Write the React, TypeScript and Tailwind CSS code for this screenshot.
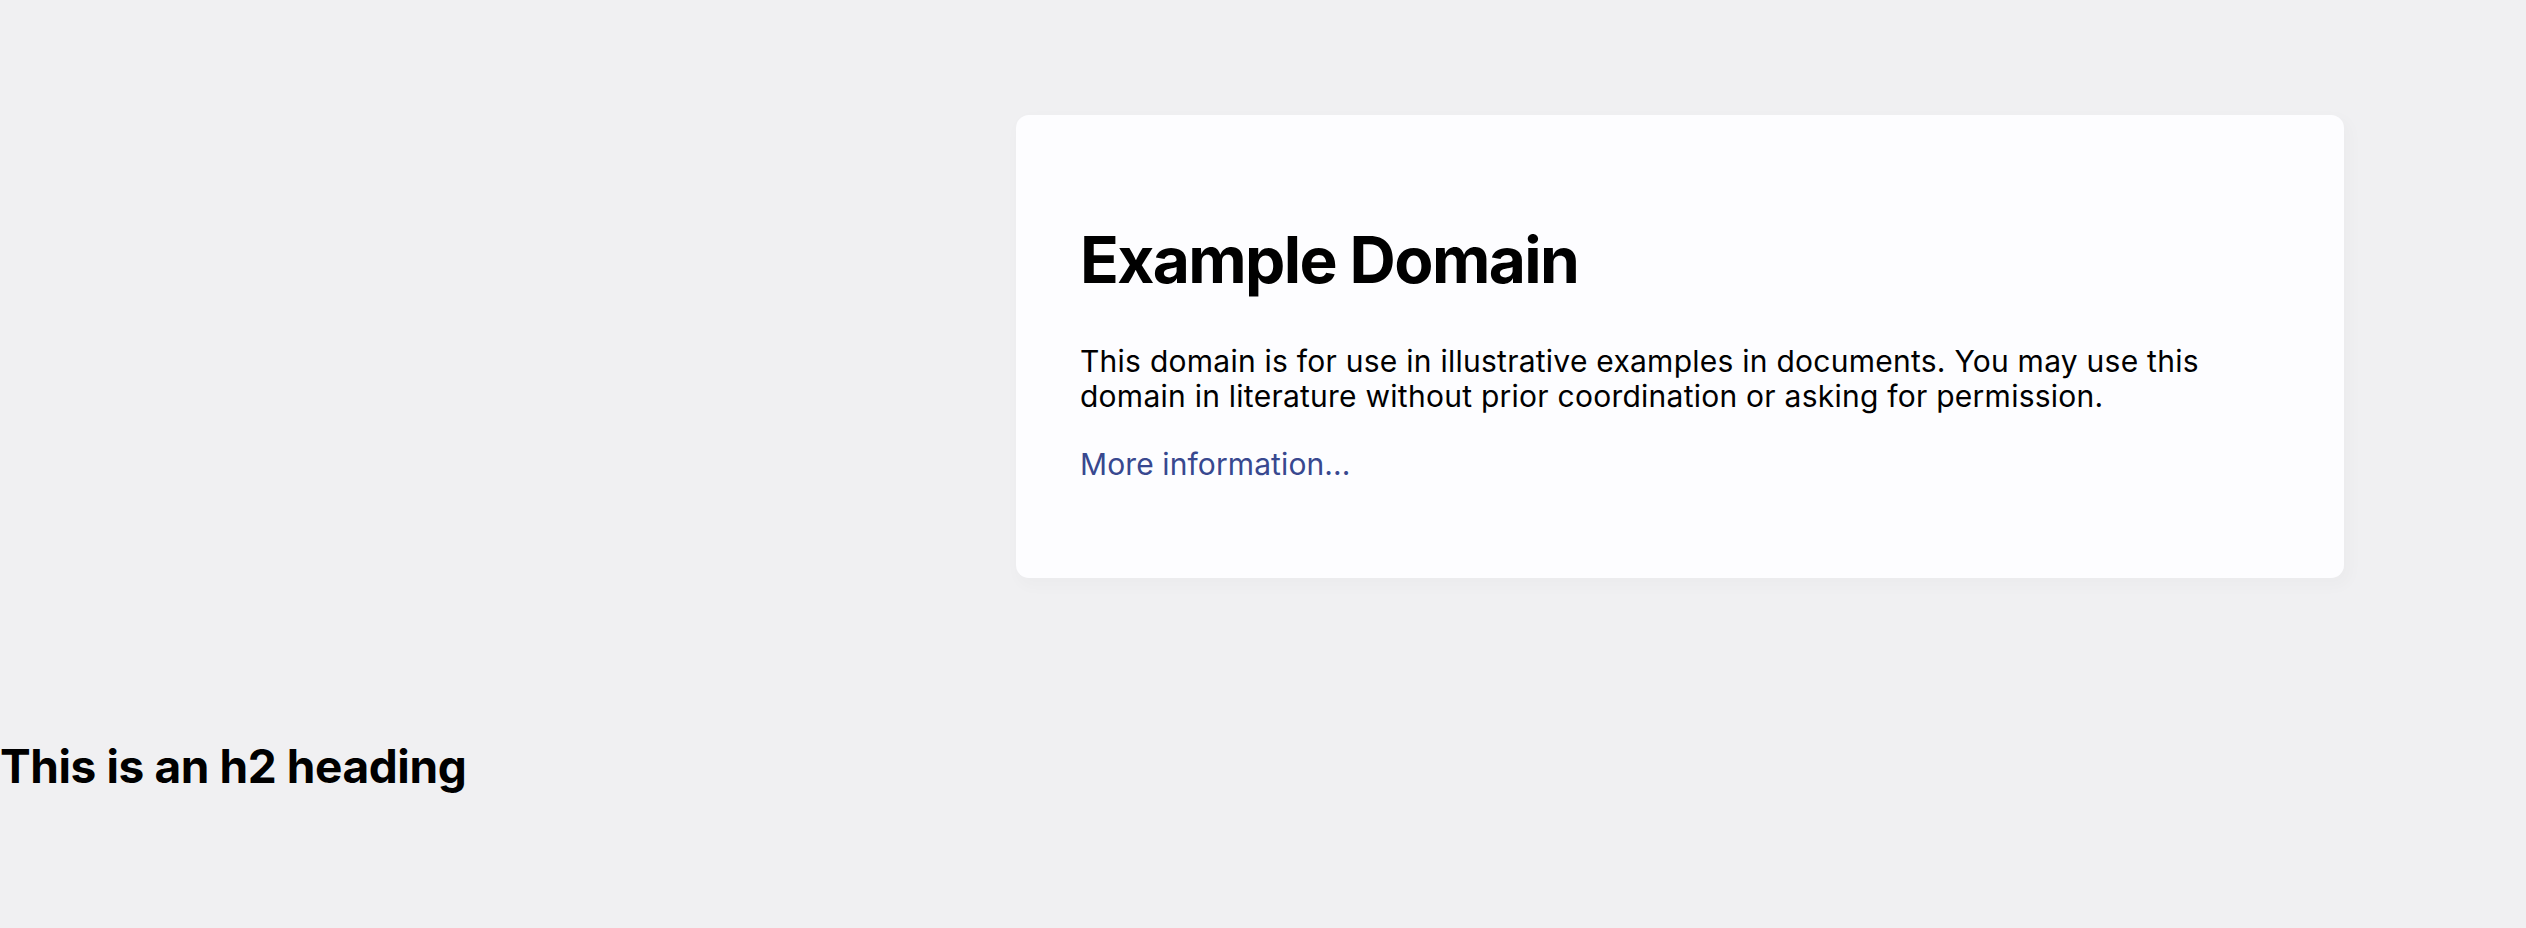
export default function App() {
  return (
    <div className="min-h-[928px] w-full bg-[#f0f0f2] overflow-hidden" style={{ fontFamily: 'Inter, "Noto Sans", sans-serif' }}>
      <div className="flex flex-col">
        <div className="ml-[1016px] mt-[115px] w-[1328px] h-[463px] rounded-[13px] bg-[#fdfdff] px-[64px] pt-[64px] shadow-[4px_6px_14px_4px_rgba(0,0,0,0.02)]">
          <h1 className="mt-[43px] text-[64px] font-bold leading-[76px] text-black tracking-[-1.6px]">Example Domain</h1>
          <p className="mt-[46px] text-[30px] leading-[35px] text-black tracking-[0.25px]">
            This domain is for use in illustrative examples in documents. You may use this domain in literature without prior coordination or asking for permission.
          </p>
          <p className="mt-[33px] text-[30px] leading-[35px] tracking-[0.1px]">
            <a href="#" className="text-[#38488f]">More information...</a>
          </p>
        </div>
        <h2 className="mt-[160px] text-[46px] font-bold leading-[56px] text-black tracking-[-0.4px]">This is an h2 heading</h2>
      </div>
    </div>
  );
}
